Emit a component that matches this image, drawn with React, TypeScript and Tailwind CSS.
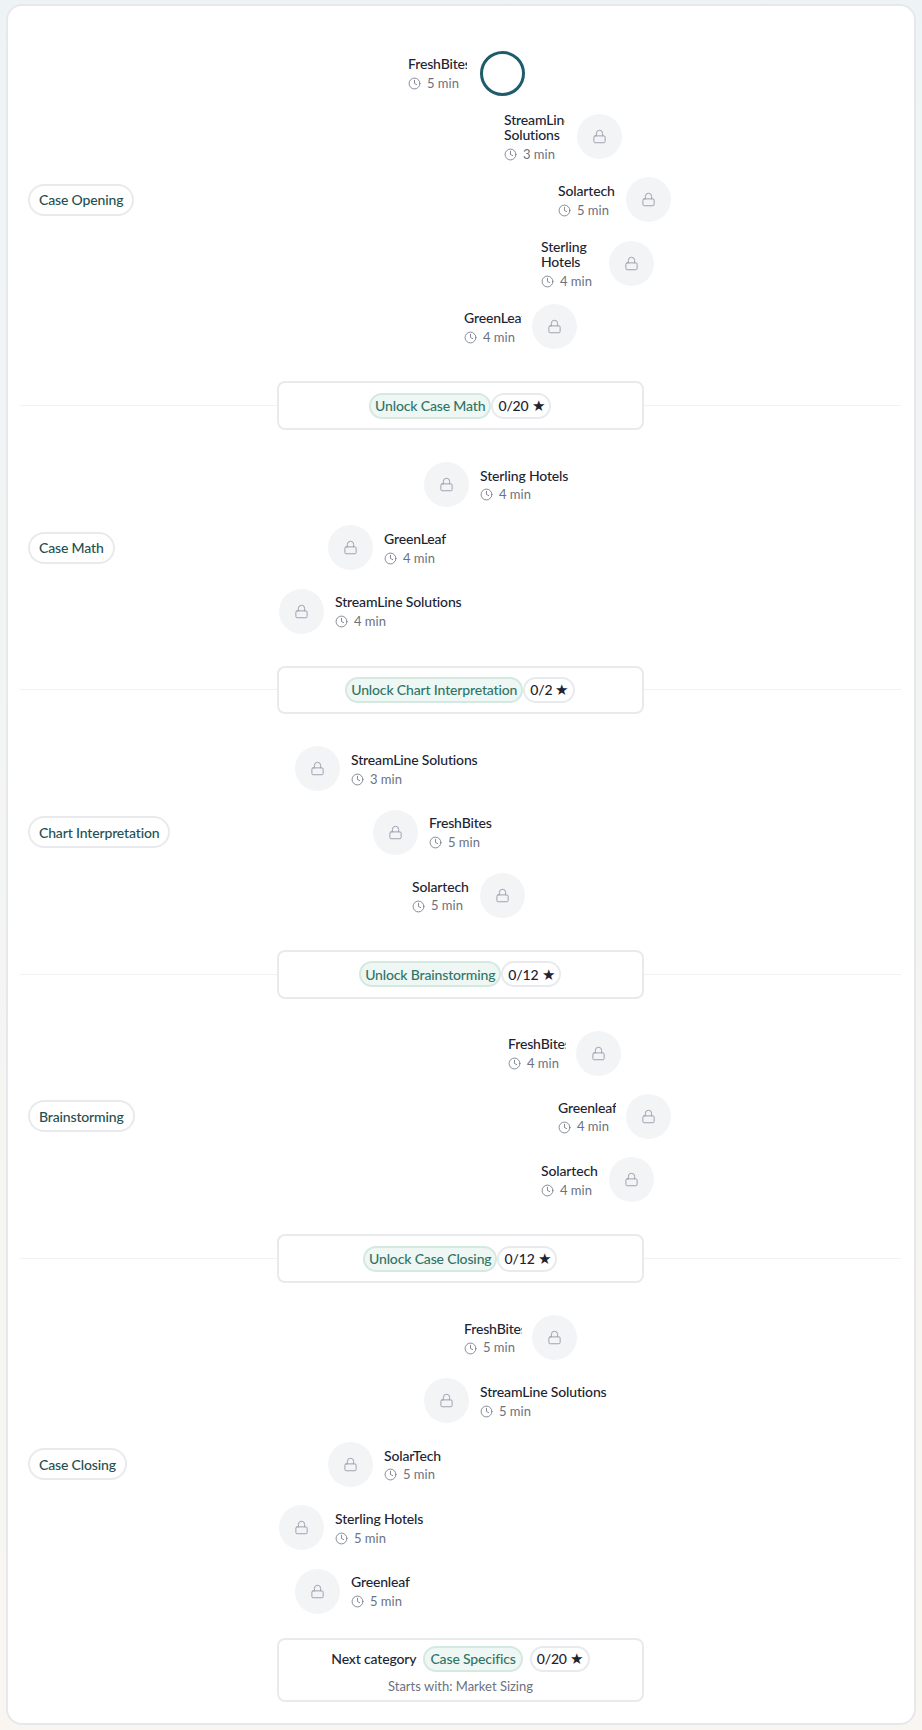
import { Clock, Lock } from 'lucide-react';

type Stop = { name: string; mins: number; side: 'left' | 'right'; offset: string; label?: string; gap?: string; active?: boolean };

const sections: { title: string; stops: Stop[]; unlock?: { label: string; score: string } }[] = [
  {
    title: 'Case Opening',
    stops: [
      { name: 'FreshBites', mins: 5, side: 'left', offset: 'ml-[180px]', label: 'w-[59px]', gap: 'gap-[13px]', active: true },
      { name: 'StreamLine Solutions', mins: 3, side: 'left', offset: 'ml-[276px]', label: 'w-[61px]', gap: 'gap-3' },
      { name: 'Solartech', mins: 5, side: 'left', offset: 'ml-[330px]' },
      { name: 'Sterling Hotels', mins: 4, side: 'left', offset: 'ml-[313px]' },
      { name: 'GreenLeaf', mins: 4, side: 'left', offset: 'ml-[236px]' },
    ],
    unlock: { label: 'Unlock Case Math', score: '0/20' },
  },
  {
    title: 'Case Math',
    stops: [
      { name: 'Sterling Hotels', mins: 4, side: 'right', offset: 'ml-[196px]' },
      { name: 'GreenLeaf', mins: 4, side: 'right', offset: 'ml-[100px]' },
      { name: 'StreamLine Solutions', mins: 4, side: 'right', offset: 'ml-[51px]' },
    ],
    unlock: { label: 'Unlock Chart Interpretation', score: '0/2' },
  },
  {
    title: 'Chart Interpretation',
    stops: [
      { name: 'StreamLine Solutions', mins: 3, side: 'right', offset: 'ml-[67px]' },
      { name: 'FreshBites', mins: 5, side: 'right', offset: 'ml-[145px]' },
      { name: 'Solartech', mins: 5, side: 'left', offset: 'ml-[184px]' },
    ],
    unlock: { label: 'Unlock Brainstorming', score: '0/12' },
  },
  {
    title: 'Brainstorming',
    stops: [
      { name: 'FreshBites', mins: 4, side: 'left', offset: 'ml-[280px]' },
      { name: 'Greenleaf', mins: 4, side: 'left', offset: 'ml-[330px]' },
      { name: 'Solartech', mins: 4, side: 'left', offset: 'ml-[313px]' },
    ],
    unlock: { label: 'Unlock Case Closing', score: '0/12' },
  },
  {
    title: 'Case Closing',
    stops: [
      { name: 'FreshBites', mins: 5, side: 'left', offset: 'ml-[236px]' },
      { name: 'StreamLine Solutions', mins: 5, side: 'right', offset: 'ml-[196px]' },
      { name: 'SolarTech', mins: 5, side: 'right', offset: 'ml-[100px]' },
      { name: 'Sterling Hotels', mins: 5, side: 'right', offset: 'ml-[51px]' },
      { name: 'Greenleaf', mins: 5, side: 'right', offset: 'ml-[67px]' },
    ],
  },
];

function ScorePill({ score }: { score: string }) {
  return (
    <span className="flex h-[26px] items-center gap-[3px] rounded-full border-2 border-[#e8eaed] bg-white px-[5px] text-[14px] font-medium tracking-[-0.15px] text-[#1c2433]">
      {score}
      <span className="text-[15px] leading-none">★</span>
    </span>
  );
}

function StopLabel({ stop }: { stop: Stop }) {
  const width = stop.side === 'left' ? `${stop.label ?? 'w-[58px]'} overflow-hidden` : 'whitespace-nowrap';
  return (
    <div className={`mt-[2px] ${width}`}>
      <div className="text-[14px] leading-[15.4px] font-medium tracking-[-0.15px] text-[#1c2433]">{stop.name}</div>
      <div className="mt-1 flex h-4 items-center gap-[6px] text-[13px] text-[#6b7280]">
        <Clock className="h-[13px] w-[13px] shrink-0 text-[#6b7280]" strokeWidth={1.5} />
        {stop.mins} min
      </div>
    </div>
  );
}

function StopRow({ stop }: { stop: Stop }) {
  const circle = stop.active ? (
    <div className="h-[45px] w-[45px] shrink-0 rounded-full border-[3.5px] border-[#1f5c6b] bg-white" />
  ) : (
    <div className="flex h-[45px] w-[45px] shrink-0 items-center justify-center rounded-full bg-[#f3f4f6]">
      <Lock className="h-[15px] w-[15px] text-[#9ca3af]" strokeWidth={1.6} />
    </div>
  );
  const gap = stop.gap ?? (stop.side === 'left' ? 'gap-[10px]' : 'gap-[11px]');

  return (
    <div className={`flex h-[45px] items-center ${gap} ${stop.offset}`}>
      {stop.side === 'left' ? (
        <>
          <StopLabel stop={stop} />
          {circle}
        </>
      ) : (
        <>
          {circle}
          <StopLabel stop={stop} />
        </>
      )}
    </div>
  );
}

export default function App() {
  return (
    <div className="min-h-screen bg-gradient-to-b from-[#eef4f5] to-[#f9f6f1] pt-1 pr-[6.5px] pb-[6px] pl-[6px] font-['Lato',sans-serif]">
      <div className="rounded-2xl border-2 border-[#e6e8ec] bg-white pt-[44.5px] pb-[21px]">
        {sections.map((section) => (
          <div key={section.title}>
            <div className="flex items-center px-5">
              <div className="w-[200px] shrink-0">
                <span className="inline-flex h-8 items-center rounded-full border-2 border-[#e8eaed] bg-white px-[9px] text-[14px] font-medium tracking-[-0.15px] text-[#24504f]">
                  {section.title}
                </span>
              </div>
              <div className="flex flex-1 flex-col gap-[18.45px]">
                {section.stops.map((stop) => (
                  <StopRow key={stop.name} stop={stop} />
                ))}
              </div>
            </div>

            {section.unlock && (
              <div className="my-8 flex items-center pr-[13px] pl-3">
                <div className="h-px flex-1 bg-[#f0f2f4]" />
                <div className="flex h-[48.5px] w-[367px] items-center justify-center rounded-lg border-2 border-[#e8eaed] bg-white">
                  <span className="flex h-[26px] items-center rounded-full border-2 border-[#d5e9e1] bg-[#eef7f3] px-1 text-[14px] font-medium tracking-[-0.15px] text-[#2f7567]">
                    {section.unlock.label}
                  </span>
                  <ScorePill score={section.unlock.score} />
                </div>
                <div className="h-px flex-1 bg-[#f0f2f4]" />
              </div>
            )}
          </div>
        ))}

        <div className="mt-6 ml-[269px] flex h-16 w-[367px] flex-col items-center justify-center gap-[6px] rounded-lg border-2 border-[#e8eaed] bg-white">
          <div className="flex items-center gap-[7px]">
            <span className="text-[14px] font-medium tracking-[-0.15px] text-[#1c2433]">Next category</span>
            <span className="flex h-[26px] items-center rounded-full border-2 border-[#d5e9e1] bg-[#eef7f3] px-[5px] text-[14px] font-medium tracking-[-0.15px] text-[#2f7567]">
              Case Specifics
            </span>
            <ScorePill score="0/20" />
          </div>
          <div className="text-[13px] leading-4 text-[#6b7280]">Starts with: Market Sizing</div>
        </div>
      </div>
    </div>
  );
}
